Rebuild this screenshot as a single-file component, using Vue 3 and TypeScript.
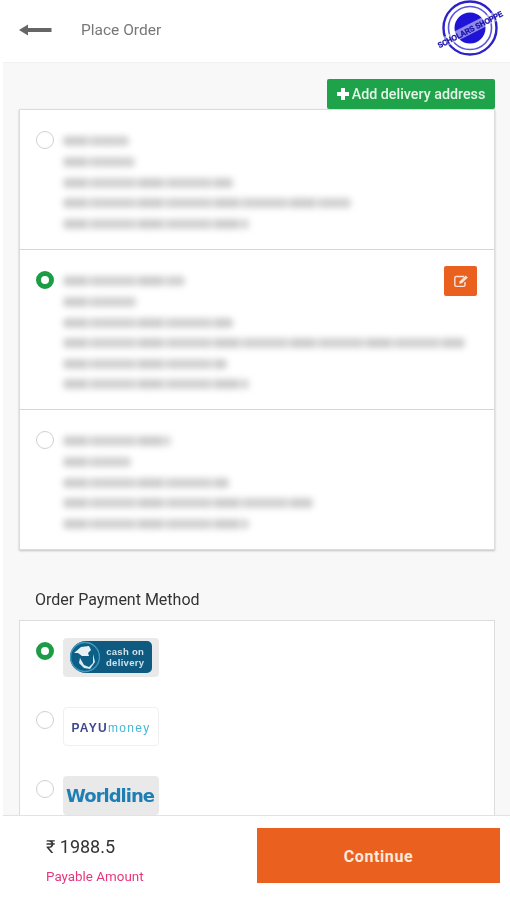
<script setup lang="ts">
interface Address {
  lines: number[]
  selected: boolean
}

const addresses: Address[] = [
  { lines: [66, 72, 170, 288, 186], selected: false },
  { lines: [122, 74, 170, 402, 164, 186], selected: true },
  { lines: [108, 68, 166, 250, 186], selected: false },
]
</script>

<template>
  <div class="page">
    <header class="top">
      <svg class="back" width="36" height="16" viewBox="0 0 36 16" aria-hidden="true">
        <path d="M1 8 10 2.6V6H33.5V10H10V13.4Z" fill="#666" />
      </svg>
      <span class="title">Place Order</span>
      <svg class="stamp" width="76" height="58" viewBox="0 0 76 58" aria-hidden="true">
        <circle cx="38" cy="29" r="26.5" fill="#fff" stroke="#2b22c8" stroke-width="2.4" />
        <circle cx="38" cy="29" r="21.5" fill="none" stroke="#5a54d8" stroke-width="1.6" />
        <circle cx="38" cy="29" r="15.5" fill="#1f14d6" />
        <g transform="rotate(-27 38 30)">
          <rect x="3" y="25" width="70" height="10" fill="#fff" opacity=".5" />
          <text x="38" y="33.4" class="stamp-text" text-anchor="middle" textLength="72" lengthAdjust="spacingAndGlyphs">SCHOLARS SHOPPE</text>
        </g>
      </svg>
    </header>

    <main class="content">
      <div class="add-row">
        <button class="add-btn" type="button"><span class="plus"></span>Add delivery address</button>
      </div>

      <section class="card addresses">
        <div v-for="(a, i) in addresses" :key="i" class="address">
          <span class="radio" :class="{ on: a.selected }"></span>
          <div class="lines">
            <div v-for="(w, j) in a.lines" :key="j" class="line">
              <span class="smudge" :style="{ width: w + 'px' }"></span>
            </div>
          </div>
          <button v-if="a.selected" class="edit" type="button" aria-label="Edit">
            <svg width="16" height="14" viewBox="0 0 16 14" fill="none" aria-hidden="true">
              <path d="M11 2.5H3.2A1.4 1.4 0 0 0 1.8 3.9V11a1.4 1.4 0 0 0 1.4 1.4h7.4a1.4 1.4 0 0 0 1.4-1.4V8" stroke="#fbe3d6" stroke-width="1.4" />
              <path d="M6.2 9.8 6.8 7.2 12.6 1.4 14.8 3.6 9 9.3Z" fill="#fbe3d6" />
            </svg>
          </button>
        </div>
      </section>

      <h2 class="heading">Order Payment Method</h2>

      <section class="card payments">
        <div class="pay">
          <span class="radio on"></span>
          <div class="logo grey">
            <div class="cod">
              <svg width="30" height="32" viewBox="0 0 30 32" aria-hidden="true">
                <circle cx="15" cy="16" r="14.5" fill="#0d5f86" stroke="#3f9cc0" stroke-width="1.4" />
                <path d="M4 12 11 6 19 5 21 9 18 12 19 15 12 15 8 12Z" fill="#e8f1f5" />
                <path d="M10 17 14 24 19 26 23 22 23 13 25 21 20 28 14 27 9 22Z" fill="#dfeaf0" />
              </svg>
              <span class="cod-text">cash on<br />delivery</span>
            </div>
          </div>
        </div>
        <div class="pay">
          <span class="radio"></span>
          <div class="logo white">
            <span class="payu"><b>PAYU</b><i>money</i></span>
          </div>
        </div>
        <div class="pay">
          <span class="radio"></span>
          <div class="logo grey">
            <span class="worldline">Worldline</span>
          </div>
        </div>
      </section>
    </main>

    <footer class="bottom">
      <div class="amount">
        <div class="price">₹ 1988.5</div>
        <div class="payable">Payable Amount</div>
      </div>
      <button class="continue" type="button">Continue</button>
    </footer>
  </div>
</template>

<style>
html,
body {
  margin: 0;
  background: #fff;
}
</style>

<style scoped>
.page {
  width: 510px;
  height: 900px;
  display: flex;
  flex-direction: column;
  overflow: hidden;
  font-family: Roboto, "Liberation Sans", sans-serif;
  color: #333;
  background: #f8f8f8;
  box-sizing: border-box;
  border-left: 3px solid #fff;
}
.top {
  height: 62px;
  flex: none;
  margin-left: -3px;
  background: #fff;
  display: flex;
  align-items: center;
  padding: 0 2px 0 18px;
  border-bottom: 1px solid #f1f1f1;
}
.back {
  flex: none;
  margin-bottom: 3px;
}
.title {
  margin-left: 27px;
  margin-bottom: 2px;
  font-size: 15.5px;
  color: #777;
  filter: blur(0.4px);
}
.stamp {
  margin-left: auto;
  margin-bottom: 6px;
  filter: blur(0.4px);
}
.stamp-text {
  font: 900 8px "Liberation Sans", sans-serif;
  fill: #170ea8;
  stroke: #170ea8;
  stroke-width: 0.3px;
}
.content {
  flex: 1;
  min-height: 0;
  overflow: hidden;
  padding: 16px 15px 0 16px;
}
.add-row {
  display: flex;
  justify-content: flex-end;
  height: 30px;
}
.add-btn {
  width: 168px;
  height: 30px;
  padding: 0;
  border: 0;
  border-radius: 2px;
  background: #1fa34a;
  color: #e3f4e8;
  font: 500 14.3px Roboto, "Liberation Sans", sans-serif;
  display: flex;
  align-items: center;
  justify-content: center;
  gap: 3px;
  white-space: nowrap;
  filter: blur(0.25px);
}
.plus {
  width: 12px;
  height: 12px;
  flex: none;
  background:
    linear-gradient(#fff, #fff) center / 12px 4px no-repeat,
    linear-gradient(#fff, #fff) center / 4px 12px no-repeat;
}
.card {
  background: #fff;
  border: 1px solid #dcdcdc;
}
.addresses {
  box-shadow: 0 1px 2px rgba(0, 0, 0, 0.22);
}
.address {
  display: flex;
  align-items: flex-start;
  padding: 21px 17px 0 16px;
  box-sizing: border-box;
  height: 140px;
  border-bottom: 1px solid #d6d6d6;
}
.address:nth-child(2) {
  height: 160px;
}
.address:last-child {
  height: 139px;
  border-bottom: 0;
}
.radio {
  flex: none;
  width: 18px;
  height: 18px;
  box-sizing: border-box;
  border: 1.5px solid #cfcfcf;
  border-radius: 50%;
  background: #fff;
  filter: blur(0.4px);
}
.radio.on {
  border: 5px solid #1b9c45;
}
.lines {
  margin-left: 9px;
  flex: 1;
  min-width: 0;
}
.line {
  height: 20.5px;
  display: flex;
  align-items: center;
}
.line:first-child {
  height: 22px;
  margin-top: -1px;
}
.smudge {
  display: block;
  flex: none;
  height: 10px;
  background: repeating-linear-gradient(90deg, #cdcdcd 0 23px, #dedede 23px 29px, #d2d2d2 29px 71px, #e0e0e0 71px 76px);
  border-radius: 4px;
  filter: blur(3px);
}
.edit {
  flex: none;
  width: 33px;
  height: 30px;
  margin-top: -5px;
  padding: 0;
  border: 0;
  border-radius: 2px;
  background: #ea601f;
  display: flex;
  align-items: center;
  justify-content: center;
}
.heading {
  margin: 39px 0 0 16px;
  height: 21px;
  font-size: 16px;
  line-height: 21px;
  font-weight: 400;
  color: #333;
  filter: blur(0.4px);
}
.payments {
  margin-top: 10px;
  height: 240px;
  box-sizing: border-box;
  padding-top: 17px;
}
.pay {
  display: flex;
  align-items: flex-start;
  height: 69px;
  padding-left: 16px;
}
.pay .radio {
  margin-top: 4px;
}
.logo {
  margin-left: 9px;
  width: 96px;
  height: 39px;
  box-sizing: border-box;
  border-radius: 4px;
  display: flex;
  align-items: center;
  justify-content: center;
  overflow: hidden;
}
.logo.grey {
  background: #e9e9e9;
}
.logo.white {
  background: #fff;
  border: 1px solid #f0f0f0;
}
.cod {
  width: 82px;
  height: 32px;
  border-radius: 16px 5px 5px 16px;
  background: #0f5a80;
  display: flex;
  align-items: center;
  margin-top: -1px;
  filter: blur(0.4px);
}
.cod-text {
  margin-left: 6px;
  font: 700 9.5px/11px "Liberation Sans", sans-serif;
  letter-spacing: 0.3px;
  color: #cfe3ec;
  text-align: center;
}
.payu {
  font: 700 12px "Liberation Sans", sans-serif;
  letter-spacing: 1.3px;
  margin-top: 2px;
  filter: blur(0.4px);
}
.payu b {
  color: #3f4a8c;
}
.payu i {
  font-style: normal;
  font-weight: 400;
  color: #45b6d6;
}
.worldline {
  font: 700 18px "DejaVu Sans", sans-serif;
  letter-spacing: -1px;
  margin-right: 2px;
  color: #1f7fb4;
  filter: blur(0.4px);
}
.bottom {
  flex: none;
  height: 85px;
  margin-left: -3px;
  background: #fff;
  border-top: 1px solid #e2e2e2;
  box-sizing: border-box;
  display: flex;
  align-items: flex-start;
  padding: 12px 10px 0 46px;
}
.amount {
  flex: 1;
}
.price {
  margin-top: 8px;
  font-size: 18px;
  line-height: 22px;
  color: #333;
  filter: blur(0.3px);
}
.payable {
  margin-top: 11px;
  font-size: 13.4px;
  line-height: 15px;
  color: #e8357c;
  filter: blur(0.3px);
}
.continue {
  width: 243px;
  height: 55px;
  padding: 2px 0 0;
  border: 0;
  background: #ea601f;
  color: #fbe9dd;
  font: 700 16px Roboto, "Liberation Sans", sans-serif;
  letter-spacing: 0.6px;
}
</style>
